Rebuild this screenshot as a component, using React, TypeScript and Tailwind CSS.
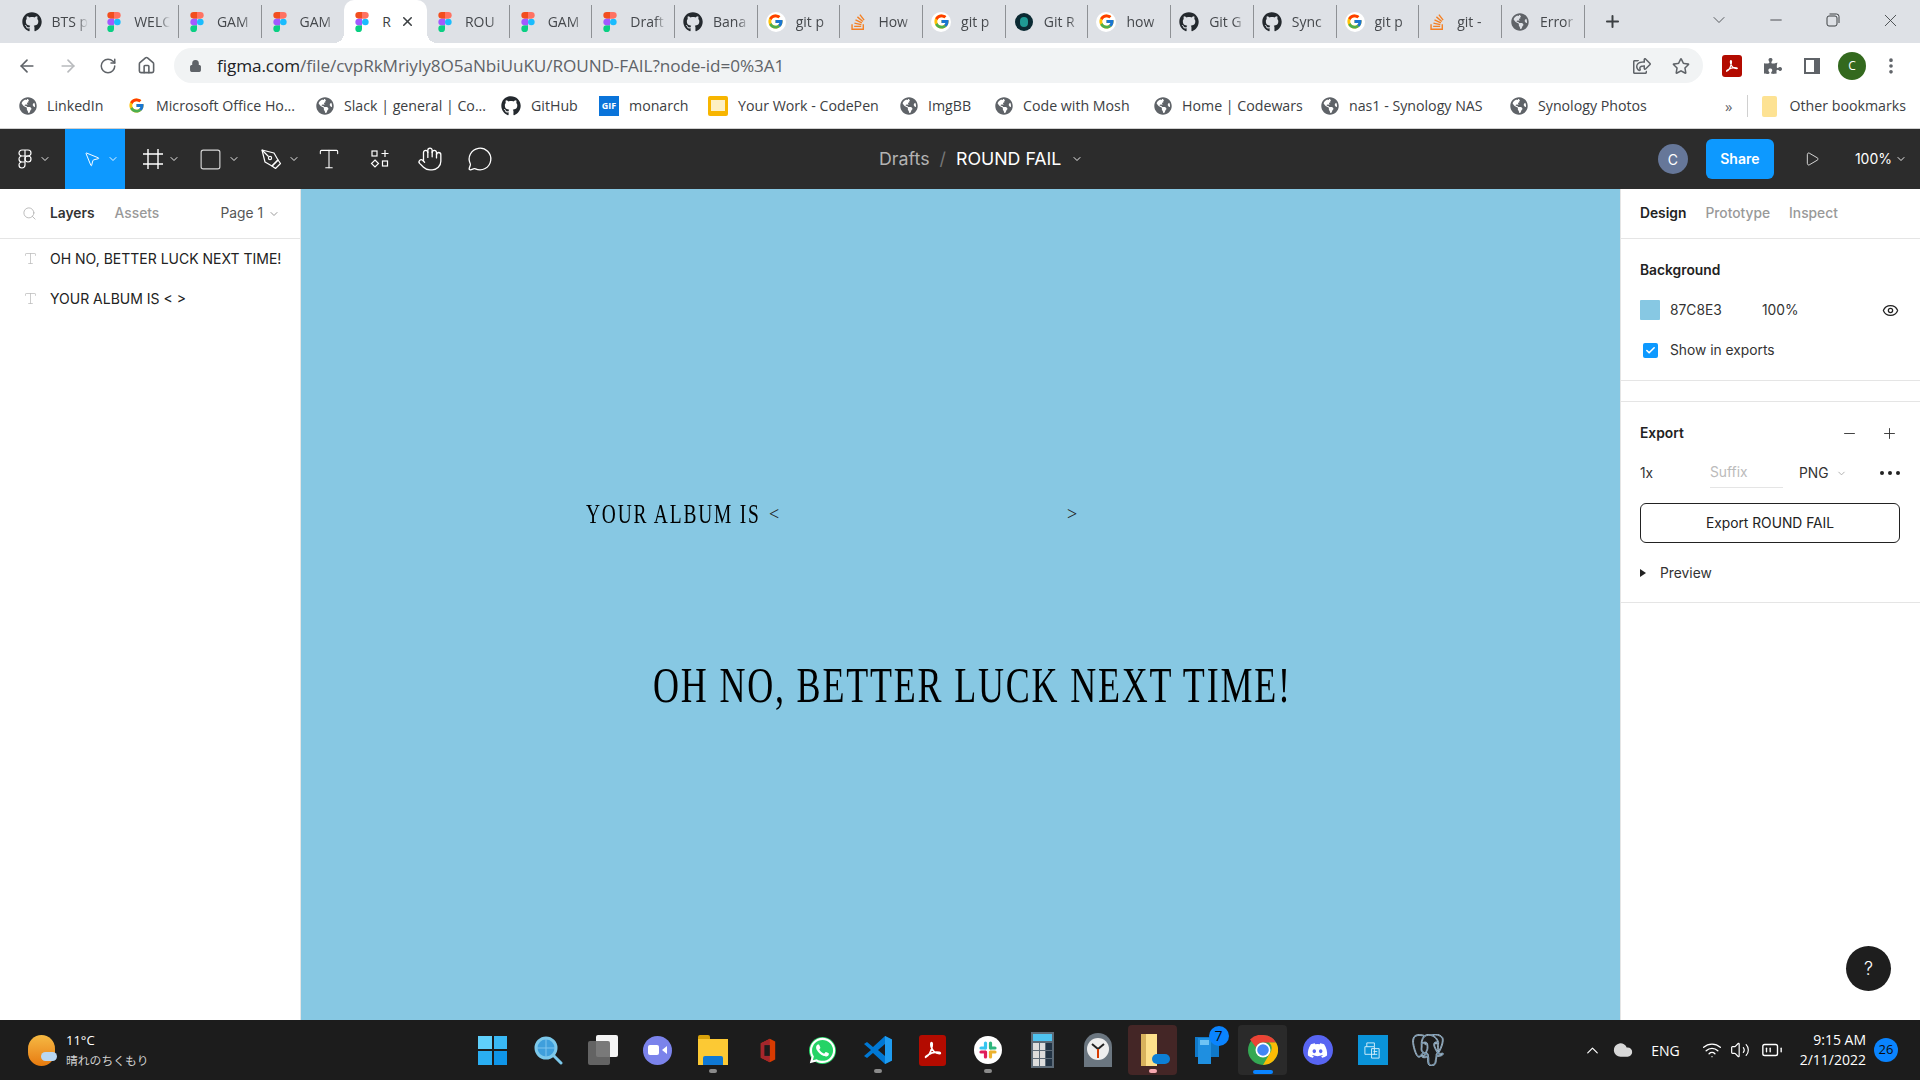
import React from "react";
import { FaGithub, FaStackOverflow, FaGlobeAmericas, FaWhatsapp, FaDiscord, FaPuzzlePiece, FaRegStar, FaRegShareSquare } from "react-icons/fa";
import { FcGoogle } from "react-icons/fc";
import { SiPostgresql } from "react-icons/si";
import { ArrowLeft, ArrowRight, RotateCw, Home, Lock, ChevronDown, ChevronUp, Minus, X, Plus, MoreVertical, Search, Square, Type, Hand, MessageCircle, Play, Eye, Check, Wifi, Volume2, BatteryMedium, Cloud, MousePointer2 } from "lucide-react";

const ui = "font-['Open_Sans','Noto_Sans_CJK_JP',sans-serif]";
const fig = "font-['Inter',sans-serif]";

function FigmaLogo({ className = "w-[14px] h-[20px]" }: { className?: string }) {
  return (
    <svg viewBox="0 0 38 57" className={className}>
      <path d="M19 28.5a9.5 9.5 0 1 1 19 0 9.5 9.5 0 0 1-19 0z" fill="#1ABCFE" />
      <path d="M0 47.5A9.5 9.5 0 0 1 9.5 38H19v9.5a9.5 9.5 0 1 1-19 0z" fill="#0ACF83" />
      <path d="M19 0v19h9.5a9.5 9.5 0 1 0 0-19H19z" fill="#FF7262" />
      <path d="M0 9.5A9.5 9.5 0 0 0 9.5 19H19V0H9.5A9.5 9.5 0 0 0 0 9.5z" fill="#F24E1E" />
      <path d="M0 28.5A9.5 9.5 0 0 0 9.5 38H19V19H9.5A9.5 9.5 0 0 0 0 28.5z" fill="#A259FF" />
    </svg>
  );
}

function AcrobatMark({ className }: { className: string }) {
  return (
    <svg viewBox="0 0 24 24" className={className} fill="none" stroke="#fff" strokeWidth="1.8" strokeLinejoin="round">
      <path d="M4 20c3-1.500 6-7 7-12 .4-2.500.2-4-.6-4-.9 0-1 2-.4 4.500 1 3.500 4 7 9 7.500 1.300 0 1.500-1-.2-1.400-4-.8-9.500.8-13 3.200-1.500 1-2.300 1.800-1.800 2.200z" />
    </svg>
  );
}

function FavIcon({ kind }: { kind: string }) {
  if (kind === "gh") return <FaGithub className="w-[20px] h-[20px] text-[#24292e]" />;
  if (kind === "g")
    return (
      <span className="w-[20px] h-[20px] rounded-full bg-white flex items-center justify-center">
        <FcGoogle className="w-[17px] h-[17px]" />
      </span>
    );
  if (kind === "so") return <FaStackOverflow className="w-[18px] h-[18px] text-[#f48024]" />;
  if (kind === "globe") return <FaGlobeAmericas className="w-[18px] h-[18px] text-[#5f6368]" />;
  if (kind === "gitr")
    return (
      <span className="w-[18px] h-[18px] rounded-full bg-[#0b2a33] flex items-center justify-center">
        <span className="w-[8px] h-[10px] rounded-full bg-[#1f9a94]" />
      </span>
    );
  return <FigmaLogo />;
}

const tabs: [string, string][] = [
  ["gh", "BTS p"], ["f", "WELC"], ["f", "GAM"], ["f", "GAM"], ["f", "R"], ["f", "ROU"], ["f", "GAM"], ["f", "Draft"], ["gh", "Bana"], ["g", "git p"],
  ["so", "How"], ["g", "git p"], ["gitr", "Git R"], ["g", "how"], ["gh", "Git G"], ["gh", "Sync"], ["g", "git p"], ["so", "git -"], ["globe", "Error"],
];

function TabStrip() {
  return (
    <div className={`h-[43px] bg-[#dee1e6] flex pl-[13.5px] ${ui} relative`}>
      {tabs.map(([k, t], i) => {
        const active = i === 4;
        return (
          <div
            key={i}
            className={`w-[82.7px] shrink-0 flex items-center relative ${active ? "bg-white rounded-t-[10px] h-[43px]" : "h-[33px] mt-[5px]"} ${i === 3 || i === 4 ? "" : "border-r border-[#8e9195]"}`}
          >
            {active && <span className="absolute -left-[10px] bottom-0 w-[10px] h-[10px] bg-[radial-gradient(circle_at_0_0,transparent_10px,white_10px)]" />}
            {active && <span className="absolute -right-[10px] bottom-0 w-[10px] h-[10px] bg-[radial-gradient(circle_at_100%_0,transparent_10px,white_10px)]" />}
            <span className="w-[20px] ml-[8px] mr-[10px] shrink-0 flex justify-center"><FavIcon kind={k} /></span>
            <span className={`text-[14px] whitespace-nowrap w-[36px] ${active ? "text-[#3c4043]" : "text-[#45484c] [mask-image:linear-gradient(to_right,black_70%,transparent_100%)]"}`}>{t}</span>
            {active && <X className="absolute right-[12px] w-[15px] h-[15px] text-[#3c4043]" strokeWidth={2.5} />}
          </div>
        );
      })}
      <Plus className="w-[19px] h-[19px] text-[#3c4043] ml-[18px] mt-[12px]" strokeWidth={2.5} />
      <div className="ml-auto flex items-center text-[#3c4043] h-[40px]">
        <ChevronDown className="w-[20px] h-[20px] mr-[38px]" strokeWidth={1} />
        <Minus className="w-[18px] h-[18px] mr-[41px]" strokeWidth={1.2} />
        <svg viewBox="0 0 14 14" className="w-[14px] h-[16px] mr-[40px]" fill="none" stroke="#3c4043"><rect x="1" y="3" width="10" height="10" rx="2" /><path d="M3.500 1h7a2.500 2.500 0 0 1 2.500 2.500V10" /></svg>
        <X className="w-[21px] h-[21px] mr-[19px]" strokeWidth={1} />
      </div>
    </div>
  );
}

function AddressBar() {
  return (
    <div className={`h-[44px] pt-[1px] bg-white flex items-center ${ui} text-[#5f6368] relative`}>
      <ArrowLeft className="w-[20px] h-[20px] ml-[17px]" strokeWidth={2} />
      <ArrowRight className="w-[20px] h-[20px] ml-[21px] text-[#b8babd]" strokeWidth={2} />
      <RotateCw className="w-[18px] h-[18px] ml-[21px]" strokeWidth={2} />
      <Home className="w-[19px] h-[19px] ml-[20px]" strokeWidth={2} />
      <div className="ml-[18px] w-[1529px] h-[35px] rounded-full bg-[#f1f3f4] flex items-center">
        <Lock className="w-[13px] h-[14px] ml-[15px] fill-[#5f6368]" strokeWidth={2} />
        <span className="ml-[15px] text-[17.2px] tracking-[-0.1px] whitespace-nowrap">
          <span className="text-[#202124]">figma.com</span>/file/cvpRkMriyIy8O5aNbiUuKU/ROUND-FAIL?node-id=0%3A1
        </span>
        <FaRegShareSquare className="ml-auto w-[18px] h-[18px]" />
        <FaRegStar className="ml-[21px] mr-[13px] w-[18px] h-[18px]" />
      </div>
      <span className="ml-[19px] w-[20px] h-[22px] rounded-[3px] bg-[#b30b00] flex items-center justify-center"><AcrobatMark className="w-[16px] h-[16px]" /></span>
      <FaPuzzlePiece className="ml-[22px] w-[18px] h-[18px]" />
      <svg viewBox="0 0 18 18" className="ml-[21px] w-[18px] h-[18px]"><path d="M1 1h16v16H1z" fill="#5f6368" /><path d="M3 3h8v12H3z" fill="#fff" /></svg>
      <span className="ml-[17px] w-[28px] h-[28px] rounded-full bg-[#33691e] flex items-center justify-center text-white text-[12px]">C</span>
      <MoreVertical className="ml-[15px] w-[20px] h-[20px]" strokeWidth={2.4} />
    </div>
  );
}

const marks: [string, string, string][] = [
  ["globe", "LinkedIn", "w-[107px]"], ["g", "Microsoft Office Ho...", "w-[190px]"], ["globe", "Slack | general | Co...", "w-[185px]"], ["gh", "GitHub", "w-[98px]"], ["gif", "monarch", "w-[109px]"],
  ["cp", "Your Work - CodePen", "w-[192px]"], ["globe", "ImgBB", "w-[95px]"], ["globe", "Code with Mosh", "w-[159px]"], ["globe", "Home | Codewars", "w-[167px]"], ["globe", "nas1 - Synology NAS", "w-[189px]"], ["globe", "Synology Photos", "w-[160px]"],
];

function Bookmarks() {
  return (
    <div className={`h-[42px] pb-[3px] bg-white flex items-center pl-[19px] text-[14.2px] text-[#3c4043] ${ui} border-b border-[#d0d0d0] whitespace-nowrap`}>
      {marks.map(([k, t, w]) => (
        <div key={t} className={`flex items-center shrink-0 gap-[10px] ${w}`}>
          {k === "gif" ? (
            <span className="w-[20px] h-[20px] bg-[#0a74da] text-white text-[9px] font-bold flex items-center justify-center">GIF</span>
          ) : k === "cp" ? (
            <span className="w-[20px] h-[20px] bg-[#f7b500] rounded-[2px] flex items-center justify-center"><span className="w-[14px] h-[11px] bg-[#fdf0c4]" /></span>
          ) : (
            <FavIcon kind={k} />
          )}
          <span>{t}</span>
        </div>
      ))}
      <span className="ml-auto text-[#5f6368] text-[15px]">»</span>
      <span className="w-px h-[22px] bg-[#d0d0d0] ml-[14px] mr-[14px]" />
      <span className="w-[15px] h-[21px] bg-[#fde293] rounded-[2px] mr-[13px]" />
      <span className="mr-[14px]">Other bookmarks</span>
    </div>
  );
}

const Chev = ({ cls = "" }: { cls?: string }) => <ChevronDown className={`w-[12px] h-[12px] text-white shrink-0 ${cls}`} strokeWidth={1.8} />;

function Toolbar() {
  return (
    <div className={`h-[60px] bg-[#2c2c2c] flex items-center text-white ${fig} shrink-0`}>
      <svg viewBox="0 0 14 20" className="ml-[18px] w-[14px] h-[20px]" fill="none" stroke="#fff" strokeWidth="1.2">
        <path d="M7 1H4a3 3 0 0 0 0 6h3zM7 1h3a3 3 0 0 1 0 6H7zM7 7H4a3 3 0 0 0 0 6h3zM7 13H4a3 3 0 1 0 3 3z" /><circle cx="10" cy="10" r="3" />
      </svg>
      <Chev cls="ml-[7px]" />
      <div className="ml-[14px] w-[60px] h-[60px] bg-[#0d99ff] flex items-center pl-[18px]">
        <MousePointer2 className="w-[18px] h-[18px]" strokeWidth={1.3} />
        <Chev cls="ml-[6px]" />
      </div>
      <svg viewBox="0 0 20 20" className="ml-[18px] w-[20px] h-[20px]" fill="none" stroke="#fff" strokeWidth="1.4"><path d="M5 0v20M15 0v20M0 5h20M0 15h20" /></svg>
      <Chev cls="ml-[5px]" />
      <Square className="ml-[18px] w-[25px] h-[25px] text-[#d6d6d6]" strokeWidth={1.1} />
      <Chev cls="ml-[5px]" />
      <svg viewBox="0 0 21 21" className="ml-[21px] w-[21px] h-[21px]" fill="none" stroke="#fff" strokeWidth="1.200" strokeLinejoin="round">
        <path d="M1 1l12 3 4 7-6 6-7-4z" /><path d="M1 1l6.500 6.500" /><circle cx="9" cy="9" r="1.600" /><path d="M14.500 19.500l5-5-2.500-3.500-6 6z" />
      </svg>
      <Chev cls="ml-[6px]" />
      <Type className="ml-[16px] w-[26px] h-[26px]" strokeWidth={1} />
      <svg viewBox="0 0 20 20" className="ml-[28px] w-[20px] h-[20px]" fill="none" stroke="#fff" strokeWidth="1.2">
        <rect x="2" y="2" width="5" height="5" /><path d="M15 1v7M11.500 4.500h7" /><path d="M5 11l3.500 3.500L5 18l-3.500-3.500z" /><rect x="12.500" y="12" width="5" height="5" />
      </svg>
      <Hand className="ml-[27px] w-[26px] h-[26px]" strokeWidth={1.2} />
      <MessageCircle className="ml-[24px] w-[26px] h-[26px]" strokeWidth={1.2} />
      <div className="flex-1 flex items-center pl-[386px]">
        <div className="flex items-center text-[17.8px]">
          <span className="text-[#b3b3b3]">Drafts</span>
          <span className="text-[#777] mx-[10px]">/</span>
          <span>ROUND FAIL</span>
          <Chev cls="ml-[10px]" />
        </div>
      </div>
      <span className="w-[30px] h-[30px] rounded-full bg-[#667799] flex items-center justify-center text-[14px] mr-[18px]">C</span>
      <span className="w-[68px] h-[40px] rounded-[6px] bg-[#0d99ff] flex items-center justify-center text-[14px] font-semibold mr-[30px] pb-[1px]">Share</span>
      <Play className="w-[16px] h-[18px] mr-[35px]" strokeWidth={1.2} />
      <span className="text-[14px] pb-[1px]">100%</span>
      <Chev cls="ml-[3px] mr-[13px]" />
    </div>
  );
}

function LeftPanel() {
  return (
    <aside className={`w-[301px] bg-white border-r border-[#e5e5e5] shrink-0 ${fig} text-[13.8px]`}>
      <div className="h-[50px] border-b border-[#e5e5e5] flex items-center pl-[22px] pr-[20px]">
        <Search className="w-[15px] h-[15px] text-[#b3b3b3]" strokeWidth={1.4} />
        <span className="ml-[13px] font-semibold text-[#333]">Layers</span>
        <span className="ml-[20px] font-medium text-[#999]">Assets</span>
        <span className="ml-auto text-[#555]">Page 1</span>
        <ChevronDown className="w-[12px] h-[12px] ml-[5px] text-[#999]" />
      </div>
      <div className="-mt-[1px]">
        {["OH NO, BETTER LUCK NEXT TIME!", "YOUR ALBUM IS < >"].map((t) => (
          <div key={t} className="h-[40px] flex items-center pl-[23px] text-[#222] whitespace-nowrap">
            <Type className="w-[15px] h-[15px] text-[#bbb]" strokeWidth={1.2} />
            <span className="ml-[12px] text-[14px]">{t}</span>
          </div>
        ))}
      </div>
    </aside>
  );
}

function RightPanel() {
  return (
    <aside className={`w-[300px] bg-white border-l border-[#e5e5e5] shrink-0 ${fig} text-[13.8px] text-[#333] relative`}>
      <div className="h-[50px] border-b border-[#e5e5e5] flex items-center pl-[19px] gap-[19px]">
        <span className="font-semibold text-[#222]">Design</span>
        <span className="font-medium text-[#999]">Prototype</span>
        <span className="font-medium text-[#999]">Inspect</span>
      </div>
      <div className="h-[142px] border-b border-[#e5e5e5] pl-[19px] pr-[21px] pt-[21px]">
        <div className="font-semibold text-[#222] leading-[20px]">Background</div>
        <div className="flex items-center mt-[20px] h-[20px]">
          <span className="w-[20px] h-[20px] bg-[#87c8e3] rounded-[1px]" />
          <span className="ml-[10px] w-[92px]">87C8E3</span>
          <span>100%</span>
          <Eye className="ml-auto w-[17px] h-[17px] text-[#222]" strokeWidth={1.8} />
        </div>
        <div className="flex items-center mt-[20px] h-[20px]">
          <span className="ml-[3px] w-[15px] h-[15px] rounded-[2px] bg-[#0d99ff] flex items-center justify-center"><Check className="w-[11px] h-[11px] text-white" strokeWidth={3.5} /></span>
          <span className="ml-[12px]">Show in exports</span>
        </div>
      </div>
      <div className="h-[21px] border-b border-[#e5e5e5]" />
      <div className="h-[201px] border-b border-[#e5e5e5] pl-[19px] pr-[20px] pt-[21px]">
        <div className="flex items-center h-[20px]">
          <span className="font-semibold text-[#222]">Export</span>
          <Minus className="ml-auto w-[17px] h-[17px]" strokeWidth={1.3} />
          <Plus className="ml-[23px] w-[17px] h-[17px] mr-[2px]" strokeWidth={1.3} />
        </div>
        <div className="flex items-center h-[20px] mt-[20px]">
          <span className="w-[70px]">1x</span>
          <span className="w-[73px] h-[30px] border-b border-[#e5e5e5] text-[#bbb] leading-[29px]">Suffix</span>
          <span className="ml-[16px]">PNG</span>
          <ChevronDown className="ml-[7px] w-[11px] h-[11px] text-[#aaa]" />
          <svg viewBox="0 0 20 4" className="ml-auto w-[20px] h-[4px]"><circle cx="2" cy="2" r="2" fill="#222" /><circle cx="10" cy="2" r="2" fill="#222" /><circle cx="18" cy="2" r="2" fill="#222" /></svg>
        </div>
        <div className="mt-[20px] h-[40px] border border-[#222] rounded-[6px] flex items-center justify-center text-[#222]">Export ROUND FAIL</div>
        <div className="flex items-center h-[20px] mt-[20px] text-[#333]">
          <span className="w-0 h-0 border-y-[4px] border-y-transparent border-l-[6px] border-l-[#222] mr-[14px]" />
          Preview
        </div>
      </div>
      <span className="absolute left-[225px] top-[757px] w-[45px] h-[45px] rounded-full bg-[#1e1e1e] text-white flex items-center justify-center text-[18px] font-light">?</span>
    </aside>
  );
}

function Canvas() {
  return (
    <main className="flex-1 bg-[#87c8e3] relative overflow-hidden font-['Liberation_Serif',serif] text-black">
      <span className="absolute left-[285px] top-[309px] text-[27px] leading-[32px] whitespace-nowrap origin-left scale-x-[0.72] tracking-[2.5px] inline-block">YOUR ALBUM IS</span>
      <span className="absolute left-[468px] top-[315px] text-[18px] leading-[20px] text-[#222]">&lt;</span>
      <span className="absolute left-[766px] top-[315px] text-[18px] leading-[20px] text-[#222]">&gt;</span>
      <span className="absolute left-[352px] top-[467px] text-[50px] leading-[58px] whitespace-nowrap origin-left scale-x-[0.72] tracking-[2.5px] inline-block">OH NO, BETTER LUCK NEXT TIME!</span>
    </main>
  );
}

function Slack() {
  return (
    <span className="w-[28px] h-[28px] rounded-full bg-white flex items-center justify-center">
      <svg viewBox="0 0 20 20" className="w-[20px] h-[20px]" strokeWidth="3.200" strokeLinecap="round" fill="none">
        <path d="M7.500 3v5" stroke="#36c5f0" /><path d="M3 8h4" stroke="#36c5f0" />
        <path d="M12.500 3v5" stroke="#2eb67d" /><path d="M13 8h4" stroke="#2eb67d" />
        <path d="M12.500 12v5" stroke="#ecb22e" /><path d="M13 12h4" stroke="#ecb22e" />
        <path d="M7.500 12v5" stroke="#e01e5a" /><path d="M3 12h4" stroke="#e01e5a" />
      </svg>
    </span>
  );
}

function TaskIcon({ k }: { k: string }) {
  switch (k) {
    case "win":
      return <span className="grid grid-cols-2 gap-[2px] w-[29px] h-[29px]"><i className="bg-[#5fd0fb]" /><i className="bg-[#39b9f5]" /><i className="bg-[#2aaef2]" /><i className="bg-[#0f95e8]" /></span>;
    case "search":
      return (
        <svg viewBox="0 0 30 30" className="w-[30px] h-[30px]"><circle cx="13" cy="13" r="10" fill="#3f9fdc" stroke="#7cc8ea" strokeWidth="3" /><path d="M20 20l8 8" stroke="#7cc8ea" strokeWidth="3" strokeLinecap="round" /><path d="M3 13h20M13 3v20" stroke="#7fc4ee" strokeWidth="1" /></svg>
      );
    case "task":
      return (
        <span className="relative w-[30px] h-[30px] block"><i className="absolute right-0 top-0 w-[22px] h-[22px] bg-[#f4f4f4] rounded-[2px]" /><i className="absolute left-0 bottom-0 w-[22px] h-[24px] bg-[#6c6c6c]/90 rounded-[2px]" /></span>
      );
    case "teams":
      return (
        <span className="w-[29px] h-[29px] rounded-full bg-[#7b83eb] flex items-center justify-center"><span className="w-[11px] h-[10px] bg-white rounded-[2px] mr-[3px]" /><span className="w-0 h-0 border-y-[4px] border-y-transparent border-r-[5px] border-r-white" /></span>
      );
    case "files":
      return (
        <span className="relative w-[30px] h-[30px] block"><i className="absolute left-0 top-0 w-[12px] h-[6px] bg-[#d9a20b] rounded-t-[2px]" /><i className="absolute left-0 top-[4px] w-[30px] h-[26px] bg-[#fcc934]" /><i className="absolute left-[5px] bottom-0 w-[20px] h-[9px] bg-[#0f78d4] rounded-t-[2px]" /></span>
      );
    case "office":
      return <svg viewBox="0 0 20 28" className="w-[18px] h-[27px]"><path d="M2 6l10-5 6 3v20l-6 3-10-5z" fill="#d83b01" /><path d="M2 6l10-5v26l-10-5z" fill="#a4262c" /><path d="M6 8h6v12H6z" fill="#1c1c1c" /></svg>;
    case "wa":
      return <span className="w-[27px] h-[27px] rounded-full bg-[#25d366] flex items-center justify-center"><FaWhatsapp className="w-[29px] h-[29px] text-white" /></span>;
    case "vs":
      return (
        <svg viewBox="0 0 30 30" className="w-[30px] h-[30px]"><path d="M22 1l7 3.500v21L22 29 10 18l-6 5-3-2 7-6-7-6 3-2 6 5z" fill="#0078d4" /><path d="M22 1l7 3.500v21L22 29z" fill="#1f9cf0" /><path d="M22 9l-7 6 7 6z" fill="#1c1c1c" /></svg>
      );
    case "pdf":
      return <span className="w-[27px] h-[31px] rounded-[3px] bg-[#b30b00] flex items-center justify-center"><AcrobatMark className="w-[22px] h-[22px]" /></span>;
    case "slack":
      return <Slack />;
    case "calc":
      return (
        <span className="w-[23px] h-[36px] bg-[#5d6b78] p-[2px] flex flex-col gap-[2px]"><i className="h-[7px] bg-[#4fc3f0]" /><span className="grid grid-cols-3 gap-[1px] flex-1"><i className="bg-[#ddd]" /><i className="bg-[#ddd]" /><i className="bg-[#234]" /><i className="bg-[#ddd]" /><i className="bg-[#ddd]" /><i className="bg-[#234]" /><i className="bg-[#ddd]" /><i className="bg-[#ddd]" /><i className="bg-[#234]" /></span></span>
      );
    case "clock":
      return (
        <svg viewBox="0 0 30 36" className="w-[30px] h-[36px]"><path d="M1 35V15a14 14 0 0 1 28 0v20z" fill="#6b7680" /><circle cx="15" cy="17" r="11" fill="#eee" /><path d="M15 17l-6-5M15 17l6-5" stroke="#222" strokeWidth="2" /><path d="M15 17v9" stroke="#d83b01" strokeWidth="2" /></svg>
      );
    case "od":
      return (
        <span className="relative w-[24px] h-[32px] block"><i className="absolute left-0 top-0 w-[16px] h-[32px] bg-[#fde08b]" /><i className="absolute left-0 top-0 w-[5px] h-[32px] bg-[#d8b25c]" /><i className="absolute -right-[5px] bottom-[2px] w-[18px] h-[10px] rounded-[5px] bg-[#0c7fd6]" /></span>
      );
    case "pc":
      return (
        <span className="relative w-[30px] h-[30px] block"><i className="absolute left-[2px] top-[2px] w-[24px] h-[20px] bg-[#0f78c8]" /><i className="absolute left-[5px] top-[3px] w-[13px] h-[26px] bg-[#1f8fe0]" /><i className="absolute left-[7px] top-[5px] w-[9px] h-[5px] bg-[#6fc4f5]" /><i className="absolute right-[-6px] top-[-9px] z-10 w-[20px] h-[20px] rounded-full bg-[#0a84ff] text-[#0a0a0a] not-italic text-[14px] leading-[20px] text-center">7</i></span>
      );
    case "chrome":
      return (
        <svg viewBox="0 0 30 30" className="w-[30px] h-[30px]"><circle cx="15" cy="15" r="15" fill="#34a853" /><path d="M15 0a15 15 0 0 1 13 7.500H15a7.500 7.500 0 0 0-7 5L2 4.500A15 15 0 0 1 15 0z" fill="#ea4335" /><path d="M28 7.500A15 15 0 0 1 15 30l7-12a7.500 7.500 0 0 0-1-10.500z" fill="#fbbc05" /><circle cx="15" cy="15" r="7.500" fill="#fff" /><circle cx="15" cy="15" r="5.800" fill="#4285f4" /></svg>
      );
    case "disc":
      return <span className="w-[30px] h-[30px] rounded-full bg-[#5865f2] flex items-center justify-center"><FaDiscord className="w-[21px] h-[21px] text-white" /></span>;
    case "printer":
      return (
        <span className="w-[30px] h-[30px] bg-[#0a93d8] flex items-center justify-center">
          <svg viewBox="0 0 20 20" className="w-[19px] h-[19px]" fill="none" stroke="#d3eefa" strokeWidth="1"><path d="M4 6V2h8v4M2 6h10v8H2zM9 8h8v10H9zM11 11h4M11 14h4" /></svg>
        </span>
      );
    case "pg":
      return <SiPostgresql className="w-[32px] h-[32px] text-[#3d6f97]" stroke="#c7d8e4" strokeWidth={0.5} />;
  }
  return null;
}

const taskItems: { k: string; dot?: string; bg?: string }[] = [
  { k: "win" }, { k: "search" }, { k: "task" }, { k: "teams" }, { k: "files", dot: "g" }, { k: "office" }, { k: "wa" }, { k: "vs", dot: "g" }, { k: "pdf" },
  { k: "slack", dot: "g" }, { k: "calc" }, { k: "clock" }, { k: "od", dot: "p", bg: "bg-[#442626]" }, { k: "pc" }, { k: "chrome", dot: "b", bg: "bg-[#2a2a2a]" }, { k: "disc" }, { k: "printer" }, { k: "pg" },
];

function Taskbar() {
  return (
    <footer className={`h-[60px] bg-[#1c1c1c] flex items-center text-white shrink-0 ${ui}`}>
      <div className="w-[465px] flex items-center pl-[28px]">
        <span className="relative w-[27px] h-[31px] rounded-full bg-gradient-to-b from-[#f5b942] to-[#e67a0a] block">
          <i className="absolute -right-[2px] bottom-[5px] w-[16px] h-[9px] rounded-full bg-[#b9d7f2]" />
        </span>
        <div className="ml-[11px]">
          <div className="text-[13px] leading-[20px]">11°C</div>
          <div className="text-[11.8px] leading-[21px] text-[#d0d0d0]">晴れのちくもり</div>
        </div>
      </div>
      <div className="flex items-center">
        {taskItems.map((t) => (
          <div key={t.k} className="w-[55px] h-[60px] flex items-center justify-center relative">
            {t.bg && <span className={`absolute left-[3px] right-[3px] top-[5px] bottom-[5px] rounded-[4px] ${t.bg}`} />}
            <span className="relative"><TaskIcon k={t.k} /></span>
            {t.dot === "g" && <span className="absolute bottom-[7px] w-[8px] h-[4px] rounded-full bg-[#8a8a8a]" />}
            {t.dot === "p" && <span className="absolute bottom-[7px] w-[8px] h-[4px] rounded-full bg-[#f7a8b0]" />}
            {t.dot === "b" && <span className="absolute bottom-[6px] w-[20px] h-[4px] rounded-full bg-[#0a84ff]" />}
          </div>
        ))}
      </div>
      <div className="ml-auto flex items-center">
        <ChevronUp className="w-[19px] h-[19px]" strokeWidth={1.5} />
        <Cloud className="ml-[11px] w-[20px] h-[20px] fill-[#d8d8d8] text-[#d8d8d8]" />
        <span className="ml-[18px] text-[14px]">ENG</span>
        <Wifi className="ml-[22px] w-[20px] h-[20px]" strokeWidth={1.6} />
        <Volume2 className="ml-[8px] w-[20px] h-[20px]" strokeWidth={1.4} />
        <BatteryMedium className="ml-[11px] w-[22px] h-[22px]" strokeWidth={1.5} />
        <div className="ml-[17px] text-right text-[14px] leading-[20px]">
          <div>9:15 AM</div>
          <div>2/11/2022</div>
        </div>
        <span className="ml-[8px] mr-[22px] w-[24px] h-[24px] rounded-full bg-[#0a84ff] text-[#0a0a0a] text-[13px] flex items-center justify-center">26</span>
      </div>
    </footer>
  );
}

export default function App() {
  return (
    <div className="w-[1920px] h-[1080px] flex flex-col overflow-hidden bg-white">
      <TabStrip />
      <AddressBar />
      <Bookmarks />
      <Toolbar />
      <div className="flex-1 flex min-h-0">
        <LeftPanel />
        <Canvas />
        <RightPanel />
      </div>
      <Taskbar />
    </div>
  );
}
